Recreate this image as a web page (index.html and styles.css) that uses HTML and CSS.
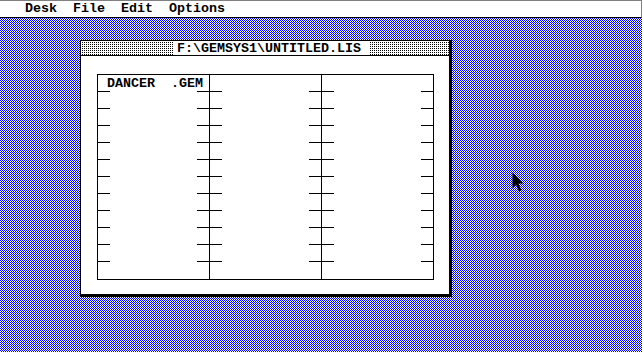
FILE: index.html
```html
<!DOCTYPE html>
<html lang="en">

<head>
    <meta charset="UTF-8">
    <title>GEM Desktop</title>
    <link rel="stylesheet" href="styles.css">
</head>

<body>
    <div class="menubar">
        <span class="menu">Desk</span>
        <span class="menu">File</span>
        <span class="menu">Edit</span>
        <span class="menu">Options</span>
    </div>
    <div class="desktop">
        <svg class="backdrop" width="642" height="334" shape-rendering="crispEdges">
            <defs>
                <pattern id="checker" width="2" height="2" patternUnits="userSpaceOnUse">
                    <rect width="2" height="2" fill="#fff" />
                    <rect x="0" y="0" width="1" height="1" fill="#0000ff" />
                    <rect x="1" y="1" width="1" height="1" fill="#0000ff" />
                </pattern>
            </defs>
            <rect width="642" height="334" fill="url(#checker)" />
        </svg>
        <div class="window">
            <div class="titlebar">
                <span class="title">F:\GEMSYS1\UNTITLED.LIS</span>
            </div>
            <div class="content">
                <div class="list">
                    <div class="column" id="col1"></div>
                    <div class="column" id="col2"></div>
                    <div class="column" id="col3"></div>
                </div>
            </div>
        </div>
        <svg class="cursor" width="12" height="21" viewBox="0 0 12 21">
            <polygon points="0.5,0.5 0.5,16 4,12.5 7,19.5 9.5,18.5 6.5,11.5 11,11.5" fill="#000" />
        </svg>
    </div>
    <script>
        const files = ["DANCER  .GEM"];
        const cols = document.querySelectorAll('.column');
        cols.forEach(function (col, c) {
            for (let i = 0; i < 12; i++) {
                const cell = document.createElement('div');
                cell.className = 'cell';
                const name = files[c * 12 + i];
                if (name) cell.textContent = name;
                col.appendChild(cell);
            }
        });
    </script>
</body>

</html>
```

FILE: styles.css
```css
body {
    margin: 0;
    width: 642px;
    height: 352px;
    overflow: hidden;
    font-family: "Liberation Mono", monospace;
    font-size: 13.33px;
    font-weight: bold;
    color: #000;
}

.menubar {
    height: 16px;
    line-height: 16px;
    background: #fff;
    border-top: 1px solid #808080;
    border-right: 1px solid #808080;
    border-bottom: 1px solid #000;
    padding-left: 25px;
    display: flex;
    gap: 16px;
    white-space: pre;
}

.desktop {
    position: relative;
    height: 334px;
}

.backdrop {
    position: absolute;
    left: 0;
    top: 0;
    display: block;
}

.window {
    position: absolute;
    left: 80px;
    top: 22px;
    width: 368px;
    background: #fff;
    border-left: 1px solid #000;
    border-top: 1px solid #000;
    border-right: 3px solid #000;
    border-bottom: 3px solid #000;
}

.titlebar {
    height: 14px;
    border-bottom: 1px solid #000;
    padding-left: 92px;
    display: flex;
    background:
        linear-gradient(90deg, #fff 1px, transparent 1px) 0 0 / 2px 2px,
        linear-gradient(#fff 1px, transparent 1px) 0 0 / 2px 2px,
        #000;
}

.title {
    background: #fff;
    padding: 0 8px 0 4px;
    line-height: 14px;
    padding-top: 1px;
    height: 13px;
    white-space: pre;
}

.content {
    padding: 18px 15px 14px 16px;
}

.list {
    display: flex;
    border: 1px solid #000;
}

.column {
    width: 111px;
    border-right: 1px solid #000;
}

.column:last-child {
    border-right: none;
}

.cell {
    height: 17px;
    line-height: 17px;
    padding-left: 9px;
    white-space: pre;
    background:
        linear-gradient(#000, #000) left bottom / 12px 1px no-repeat,
        linear-gradient(#000, #000) right bottom / 12px 1px no-repeat;
}

.cell:last-child {
    background: none;
}

.cursor {
    position: absolute;
    left: 512px;
    top: 154px;
}
```
